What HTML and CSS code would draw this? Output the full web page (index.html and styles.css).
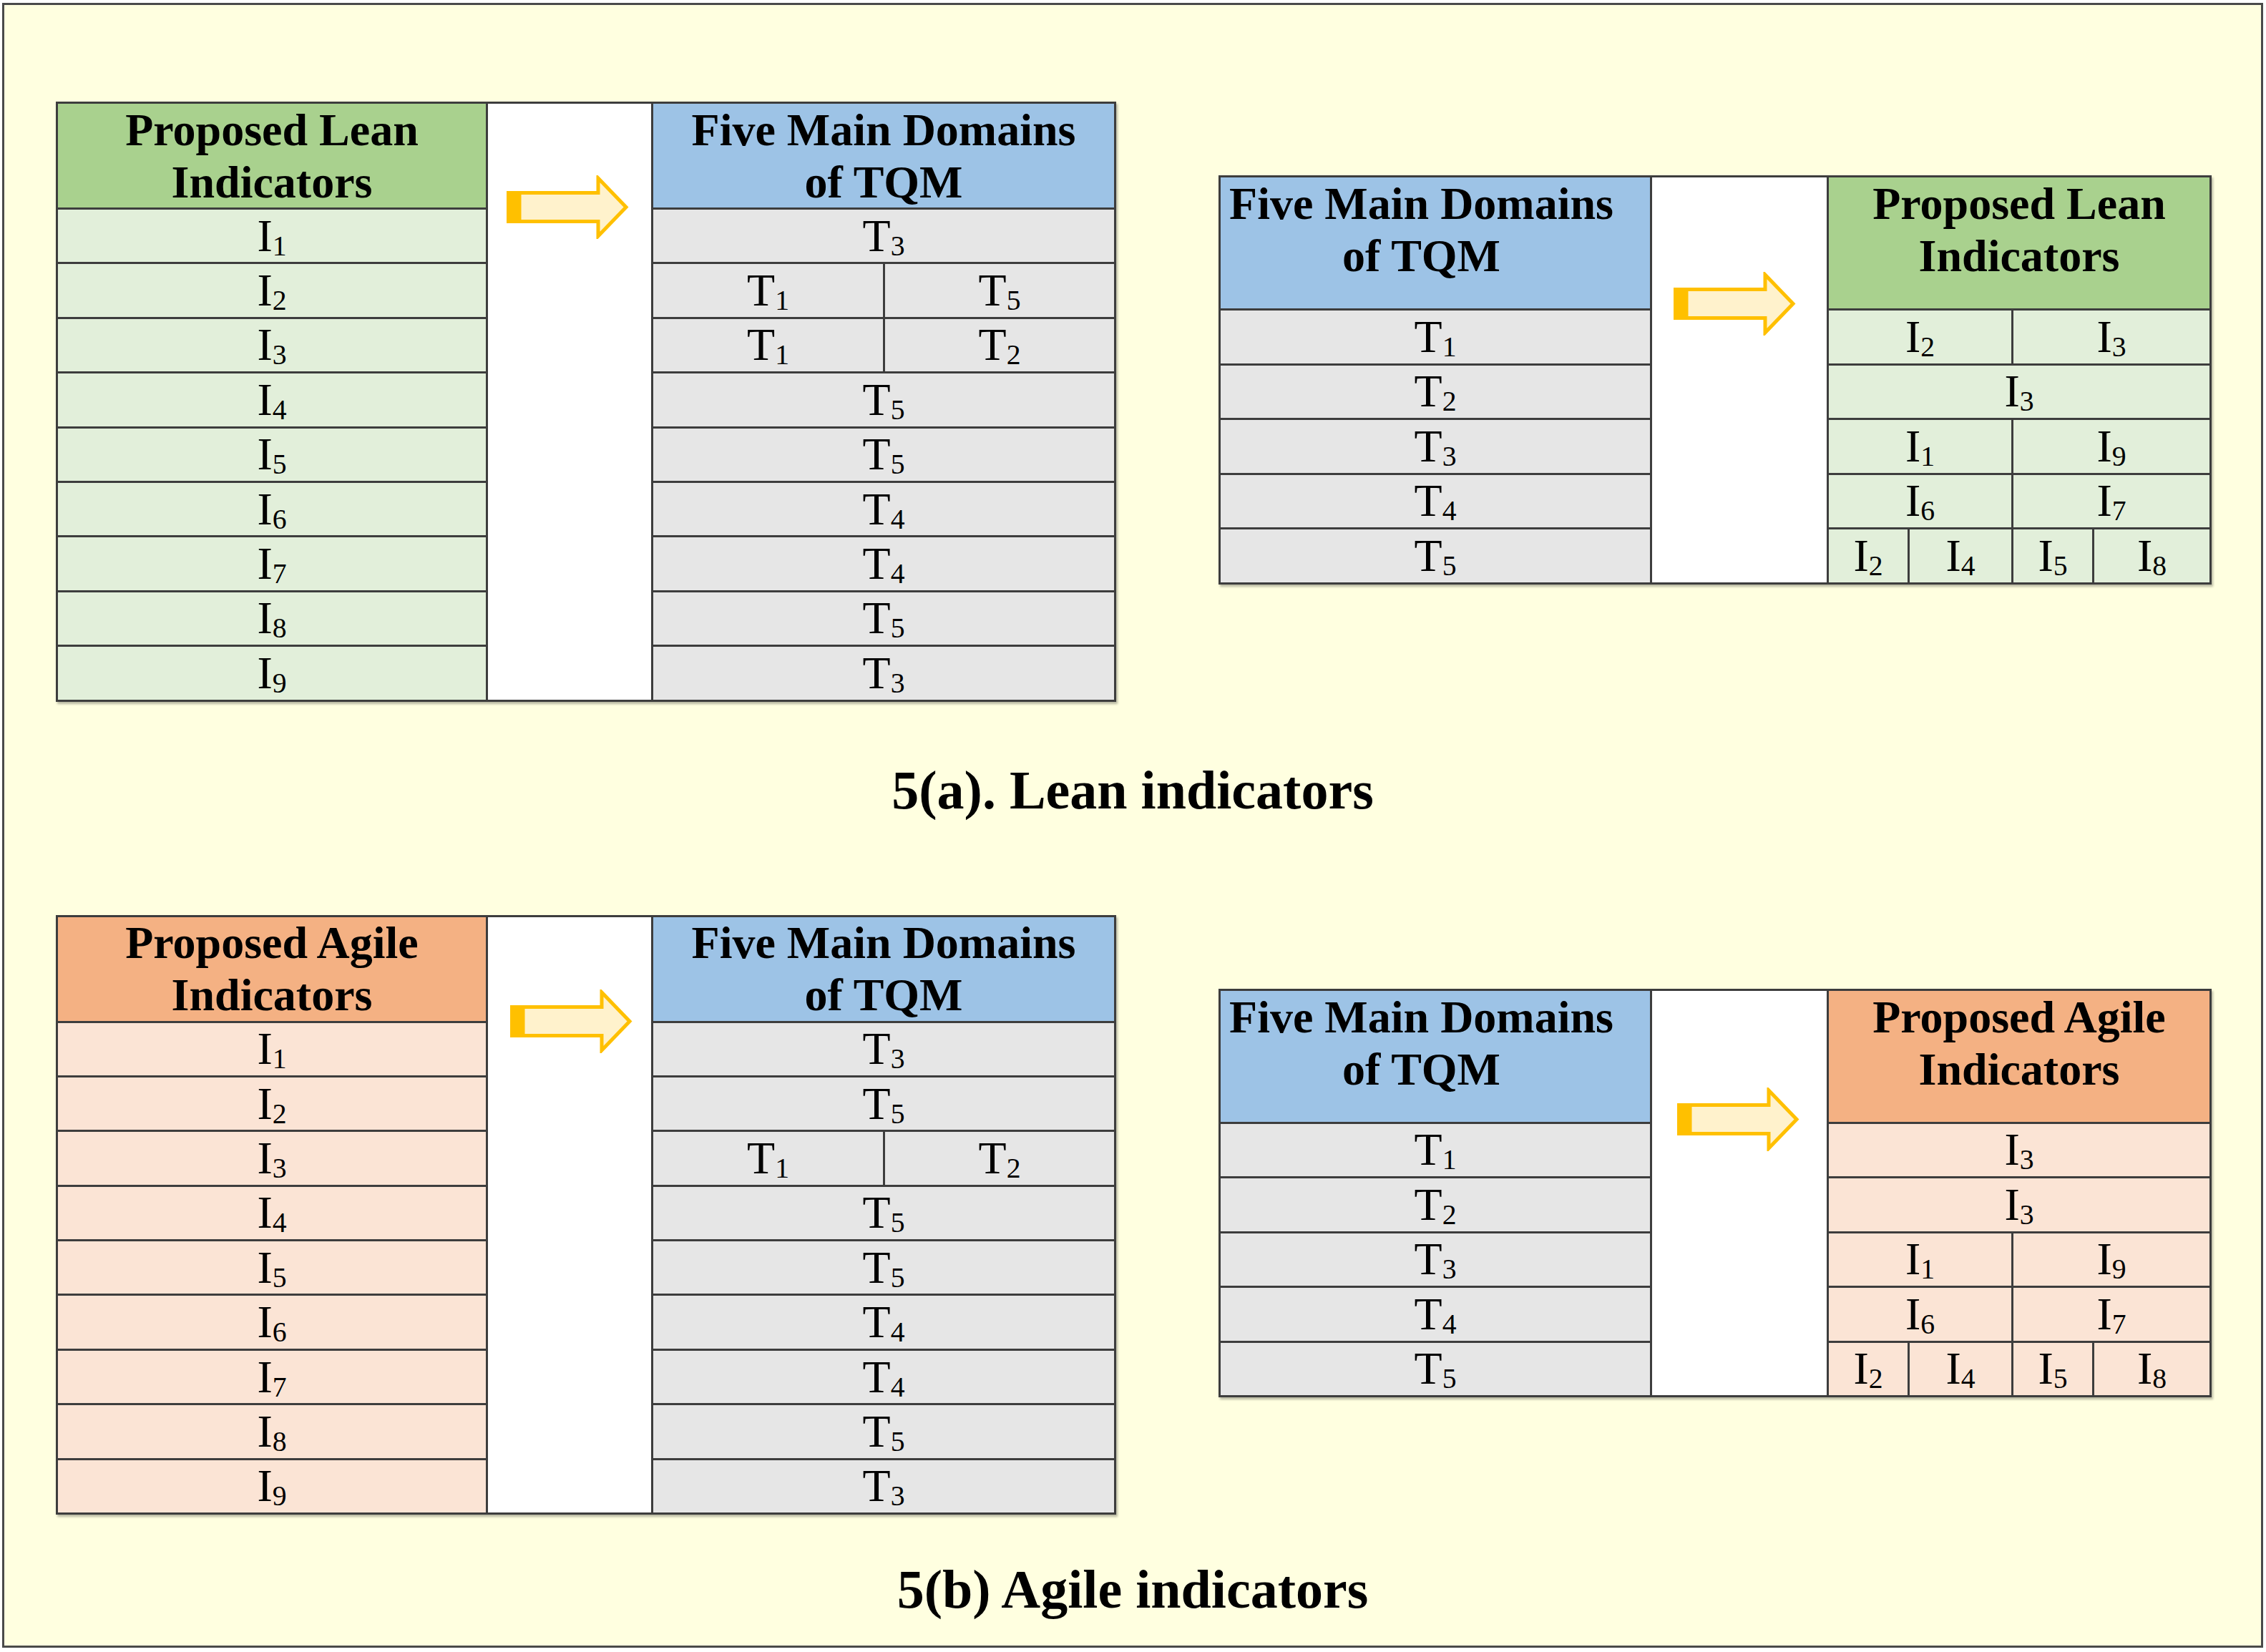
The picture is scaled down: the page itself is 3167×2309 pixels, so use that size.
FILE: index.html
```html
<!DOCTYPE html>
<html lang="en">
<head>
<meta charset="utf-8">
<title>Lean and Agile indicators mapped to TQM domains</title>
<link rel="stylesheet" href="styles.css">
</head>
<body>
<div class="frame">

  <div class="pair pair-a">
    <div class="tbl tbl-left">
      <div class="h c1 g-h"><div>Proposed Lean<br>Indicators</div></div>
      <div class="gapcol left-gap">
        <svg class="arrow" viewBox="0 0 171 89" width="171" height="89"><rect x="0" y="22" width="20" height="45" fill="#FFC000"/><path d="M18 24.5 H128 V4 L167 44.5 L128 85 V64.5 H18 Z" fill="#FFF2CC" stroke="#FFC000" stroke-width="5"/></svg>
      </div>
      <div class="h cR b-h"><div>Five Main Domains<br>of TQM</div></div>

      <div class="c c1 g"><span>I<span class="s">1</span></span></div><div class="c cR gr"><span>T<span class="s">3</span></span></div>
      <div class="c c1 g"><span>I<span class="s">2</span></span></div><div class="c cA gr"><span>T<span class="s">1</span></span></div><div class="c cB gr"><span>T<span class="s">5</span></span></div>
      <div class="c c1 g"><span>I<span class="s">3</span></span></div><div class="c cA gr"><span>T<span class="s">1</span></span></div><div class="c cB gr"><span>T<span class="s">2</span></span></div>
      <div class="c c1 g"><span>I<span class="s">4</span></span></div><div class="c cR gr"><span>T<span class="s">5</span></span></div>
      <div class="c c1 g"><span>I<span class="s">5</span></span></div><div class="c cR gr"><span>T<span class="s">5</span></span></div>
      <div class="c c1 g"><span>I<span class="s">6</span></span></div><div class="c cR gr"><span>T<span class="s">4</span></span></div>
      <div class="c c1 g"><span>I<span class="s">7</span></span></div><div class="c cR gr"><span>T<span class="s">4</span></span></div>
      <div class="c c1 g"><span>I<span class="s">8</span></span></div><div class="c cR gr"><span>T<span class="s">5</span></span></div>
      <div class="c c1 g"><span>I<span class="s">9</span></span></div><div class="c cR gr"><span>T<span class="s">3</span></span></div>
    </div>

    <div class="tbl tbl-right">
      <div class="h top c1 b-h tqm-right"><div>Five Main Domains<br>of TQM</div></div>
      <div class="gapcol right-gap">
        <svg class="arrow" viewBox="0 0 171 89" width="171" height="89"><rect x="0" y="22" width="20" height="45" fill="#FFC000"/><path d="M18 24.5 H128 V4 L167 44.5 L128 85 V64.5 H18 Z" fill="#FFF2CC" stroke="#FFC000" stroke-width="5"/></svg>
      </div>
      <div class="h top rAll g-h"><div>Proposed Lean<br>Indicators</div></div>

      <div class="c c1 gr"><span>T<span class="s">1</span></span></div><div class="c rL g"><span>I<span class="s">2</span></span></div><div class="c rR g"><span>I<span class="s">3</span></span></div>
      <div class="c c1 gr"><span>T<span class="s">2</span></span></div><div class="c rAll g"><span>I<span class="s">3</span></span></div>
      <div class="c c1 gr"><span>T<span class="s">3</span></span></div><div class="c rL g"><span>I<span class="s">1</span></span></div><div class="c rR g"><span>I<span class="s">9</span></span></div>
      <div class="c c1 gr"><span>T<span class="s">4</span></span></div><div class="c rL g"><span>I<span class="s">6</span></span></div><div class="c rR g"><span>I<span class="s">7</span></span></div>
      <div class="c c1 gr"><span>T<span class="s">5</span></span></div><div class="c q1 g"><span>I<span class="s">2</span></span></div><div class="c q2 g"><span>I<span class="s">4</span></span></div><div class="c q3 g"><span>I<span class="s">5</span></span></div><div class="c q4 g"><span>I<span class="s">8</span></span></div>
    </div>
  </div>

  <div class="caption caption-a">5(a). Lean indicators</div>

  <div class="pair pair-b">
    <div class="tbl tbl-left">
      <div class="h c1 o-h"><div>Proposed Agile<br>Indicators</div></div>
      <div class="gapcol left-gap left-gap-b">
        <svg class="arrow" viewBox="0 0 171 89" width="171" height="89"><rect x="0" y="22" width="20" height="45" fill="#FFC000"/><path d="M18 24.5 H128 V4 L167 44.5 L128 85 V64.5 H18 Z" fill="#FFF2CC" stroke="#FFC000" stroke-width="5"/></svg>
      </div>
      <div class="h cR b-h"><div>Five Main Domains<br>of TQM</div></div>

      <div class="c c1 o"><span>I<span class="s">1</span></span></div><div class="c cR gr"><span>T<span class="s">3</span></span></div>
      <div class="c c1 o"><span>I<span class="s">2</span></span></div><div class="c cR gr"><span>T<span class="s">5</span></span></div>
      <div class="c c1 o"><span>I<span class="s">3</span></span></div><div class="c cA gr"><span>T<span class="s">1</span></span></div><div class="c cB gr"><span>T<span class="s">2</span></span></div>
      <div class="c c1 o"><span>I<span class="s">4</span></span></div><div class="c cR gr"><span>T<span class="s">5</span></span></div>
      <div class="c c1 o"><span>I<span class="s">5</span></span></div><div class="c cR gr"><span>T<span class="s">5</span></span></div>
      <div class="c c1 o"><span>I<span class="s">6</span></span></div><div class="c cR gr"><span>T<span class="s">4</span></span></div>
      <div class="c c1 o"><span>I<span class="s">7</span></span></div><div class="c cR gr"><span>T<span class="s">4</span></span></div>
      <div class="c c1 o"><span>I<span class="s">8</span></span></div><div class="c cR gr"><span>T<span class="s">5</span></span></div>
      <div class="c c1 o"><span>I<span class="s">9</span></span></div><div class="c cR gr"><span>T<span class="s">3</span></span></div>
    </div>

    <div class="tbl tbl-right">
      <div class="h top c1 b-h tqm-right"><div>Five Main Domains<br>of TQM</div></div>
      <div class="gapcol right-gap right-gap-b">
        <svg class="arrow" viewBox="0 0 171 89" width="171" height="89"><rect x="0" y="22" width="20" height="45" fill="#FFC000"/><path d="M18 24.5 H128 V4 L167 44.5 L128 85 V64.5 H18 Z" fill="#FFF2CC" stroke="#FFC000" stroke-width="5"/></svg>
      </div>
      <div class="h top rAll o-h"><div>Proposed Agile<br>Indicators</div></div>

      <div class="c c1 gr"><span>T<span class="s">1</span></span></div><div class="c rAll o"><span>I<span class="s">3</span></span></div>
      <div class="c c1 gr"><span>T<span class="s">2</span></span></div><div class="c rAll o"><span>I<span class="s">3</span></span></div>
      <div class="c c1 gr"><span>T<span class="s">3</span></span></div><div class="c rL o"><span>I<span class="s">1</span></span></div><div class="c rR o"><span>I<span class="s">9</span></span></div>
      <div class="c c1 gr"><span>T<span class="s">4</span></span></div><div class="c rL o"><span>I<span class="s">6</span></span></div><div class="c rR o"><span>I<span class="s">7</span></span></div>
      <div class="c c1 gr"><span>T<span class="s">5</span></span></div><div class="c q1 o"><span>I<span class="s">2</span></span></div><div class="c q2 o"><span>I<span class="s">4</span></span></div><div class="c q3 o"><span>I<span class="s">5</span></span></div><div class="c q4 o"><span>I<span class="s">8</span></span></div>
    </div>
  </div>

  <div class="caption caption-b">5(b) Agile indicators</div>

</div>
</body>
</html>
```

FILE: styles.css
```css
html, body {
  margin: 0;
  padding: 0;
  background: #ffffff;
}

.frame {
  box-sizing: border-box;
  width: 3160px;
  height: 2299px;
  margin: 4px 0 0 3px;
  border: 3px solid #4a4a4a;
  background: #FFFFE0;
  padding-top: 135px;
  font-family: "Liberation Serif", "Times New Roman", serif;
  color: #000;
}

.pair {
  display: flex;
  align-items: flex-start;
  gap: 143px;
  padding-left: 72px;
}

.pair-b {
  margin-top: 137px;
}

.tbl {
  display: grid;
  gap: 3px;
  padding: 3px;
  background: #3d3d3d;
  box-shadow: 2px 3px 3px rgba(0, 0, 0, 0.28);
}

.tbl-left {
  grid-template-columns: 598px 228px 321px 320px;
  grid-template-rows: 145px repeat(9, 73.4px);
}

.tbl-right {
  margin-top: 103px;
  grid-template-columns: 600px 244px 110px 142px 110px 161px;
  grid-template-rows: 183px repeat(5, 73.5px);
}

/* column placement */
.c1 { grid-column: 1; }
.cR { grid-column: 3 / 5; }
.cA { grid-column: 3; }
.cB { grid-column: 4; }
.rAll { grid-column: 3 / 7; }
.rL { grid-column: 3 / 5; }
.rR { grid-column: 5 / 7; }
.q1 { grid-column: 3; }
.q2 { grid-column: 4; }
.q3 { grid-column: 5; }
.q4 { grid-column: 6; }

.gapcol {
  grid-column: 2;
  grid-row: 1 / -1;
  background: #ffffff;
  display: flex;
  align-items: flex-start;
}

.left-gap { padding: 100px 0 0 26px; }
.left-gap-b { padding: 101px 0 0 31px; }
.right-gap { padding: 132px 0 0 30px; }
.right-gap-b { padding: 135px 0 0 35px; }

.arrow {
  display: block;
  flex: none;
}

/* header cells */
.h {
  display: flex;
  flex-direction: column;
  justify-content: center;
  text-align: center;
  font-weight: bold;
  font-size: 64px;
  line-height: 73px;
}

.h.top {
  justify-content: flex-start;
}

.tqm-right {
  padding-right: 39px;
}

/* body cells */
.c {
  display: flex;
  align-items: center;
  justify-content: center;
  font-size: 64px;
  line-height: 1;
  white-space: nowrap;
}

.s {
  font-size: 0.62em;
  line-height: 0;
  vertical-align: -0.15em;
}

/* colours */
.g-h { background: #A9D18E; }
.g { background: #E2EFDA; }
.b-h { background: #9DC3E6; }
.gr { background: #E6E6E6; }
.o-h { background: #F4B183; }
.o { background: #FBE4D5; }

/* captions */
.caption {
  font-weight: bold;
  font-size: 76px;
  line-height: 76px;
  text-align: center;
}

.caption-a { margin-top: 85px; }
.caption-b { margin-top: 66px; }
```
